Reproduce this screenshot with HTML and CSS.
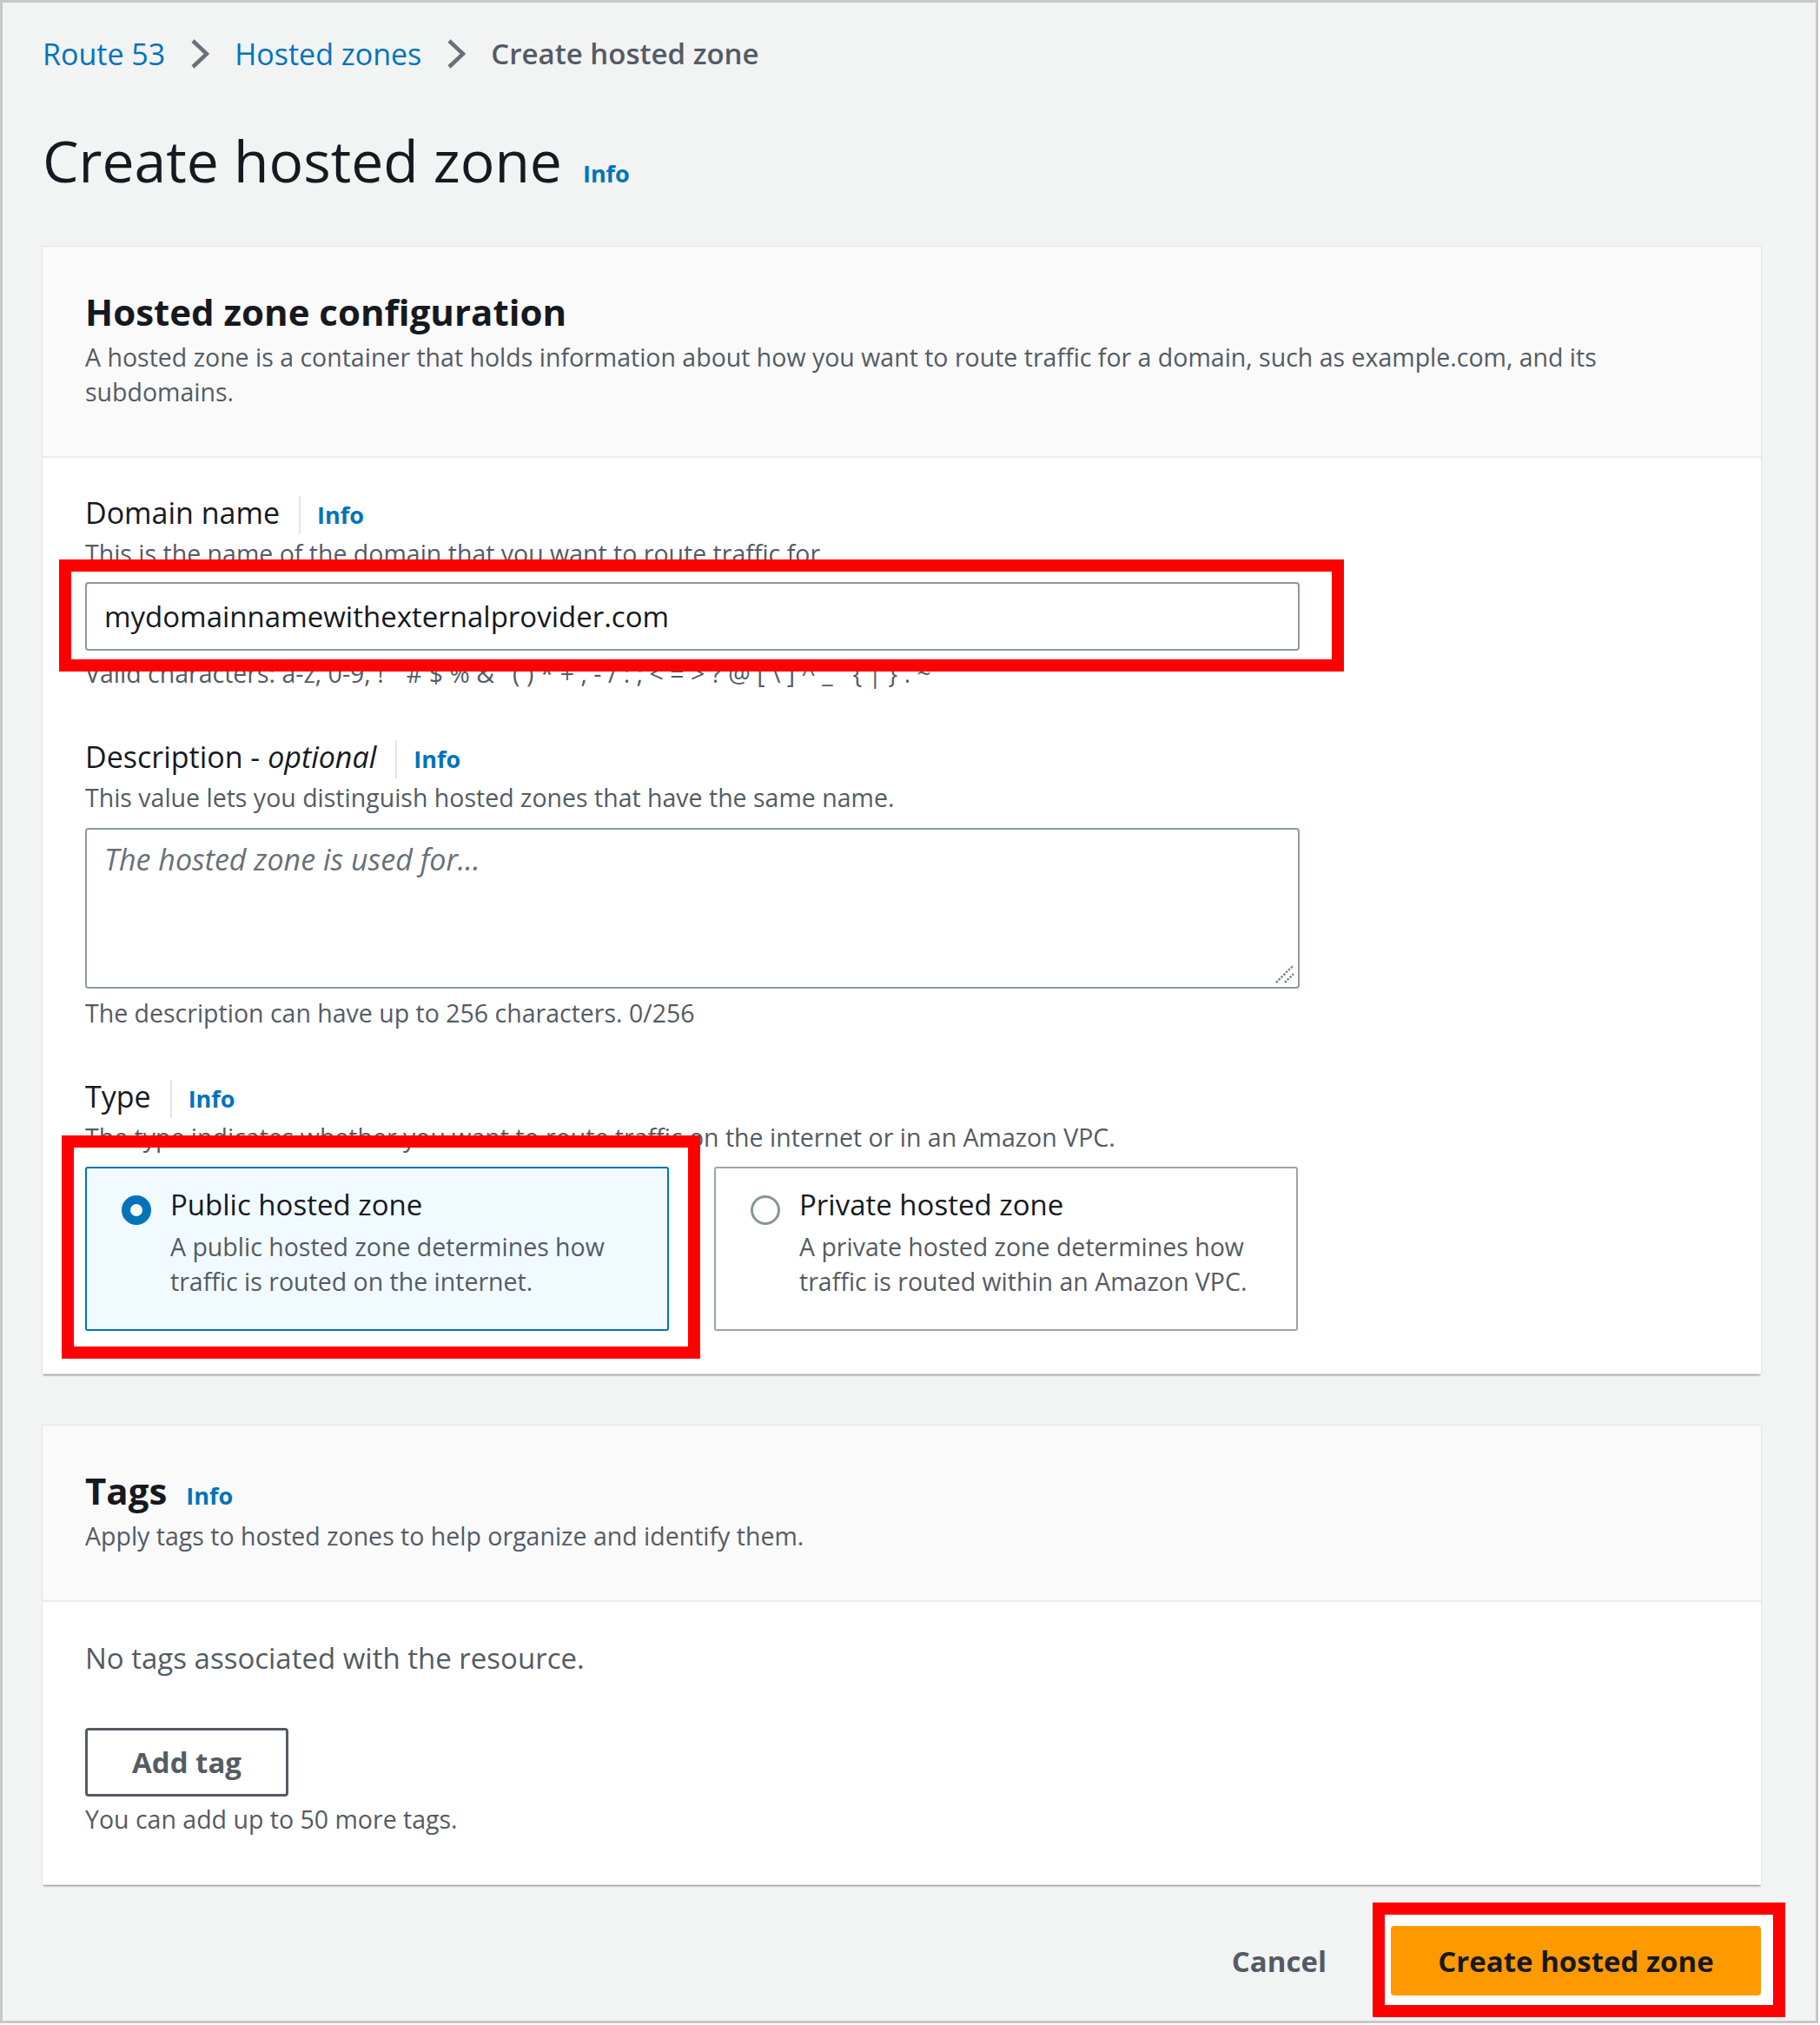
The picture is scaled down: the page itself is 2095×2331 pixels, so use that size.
FILE: index.html
```html
<!DOCTYPE html>
<html>
<head>
  <meta charset="utf-8" />
  <title>Create hosted zone</title>
  <link rel="stylesheet" href="styles.css">
</head>
<body>
  <div class="frame">

    <nav class="crumbs">
      <a href="#">Route 53</a>
      <svg class="chevron" viewBox="0 0 22 36"><polyline points="3,3 19,18 3,33" /></svg>
      <a href="#">Hosted zones</a>
      <svg class="chevron" viewBox="0 0 22 36"><polyline points="3,3 19,18 3,33" /></svg>
      <span class="here">Create hosted zone</span>
    </nav>

    <div class="page-head">
      <h1>Create hosted zone</h1>
      <a class="info" href="#">Info</a>
    </div>

    <section class="panel">
      <header class="panel-head">
        <h2>Hosted zone configuration</h2>
        <p>A hosted zone is a container that holds information about how you want to route traffic for a domain, such as example.com, and its subdomains.</p>
      </header>
      <div class="panel-body">

        <div class="field">
          <div class="label-row"><span class="label">Domain name</span><a class="info sep" href="#">Info</a></div>
          <p class="hint">This is the name of the domain that you want to route traffic for.</p>
          <input class="text-input" type="text" value="mydomainnamewithexternalprovider.com">
          <p class="hint after">Valid characters: a-z, 0-9, ! &quot; # $ % &amp; ' ( ) * + , - / : ; &lt; = &gt; ? @ [ \ ] ^ _ &#96; { | } . ~</p>
        </div>

        <div class="field">
          <div class="label-row"><span class="label">Description - <i>optional</i></span><a class="info sep" href="#">Info</a></div>
          <p class="hint">This value lets you distinguish hosted zones that have the same name.</p>
          <div class="area-wrap">
            <textarea class="text-area" placeholder="The hosted zone is used for..."></textarea>
            <svg class="grip" viewBox="0 0 24 24"><line x1="2" y1="22" x2="22" y2="2" /><line x1="12" y1="22" x2="22" y2="12" /></svg>
          </div>
          <p class="hint after count">The description can have up to 256 characters. 0/256</p>
        </div>

        <div class="field">
          <div class="label-row"><span class="label">Type</span><a class="info sep" href="#">Info</a></div>
          <p class="hint">The type indicates whether you want to route traffic on the internet or in an Amazon VPC.</p>
          <div class="choices">
            <div class="choice selected">
              <span class="radio"></span>
              <div class="choice-text">
                <div class="choice-title">Public hosted zone</div>
                <div class="choice-desc">A public hosted zone determines how traffic is routed on the internet.</div>
              </div>
            </div>
            <div class="choice">
              <span class="radio"></span>
              <div class="choice-text">
                <div class="choice-title">Private hosted zone</div>
                <div class="choice-desc">A private hosted zone determines how traffic is routed within an Amazon VPC.</div>
              </div>
            </div>
          </div>
        </div>

      </div>
    </section>

    <section class="panel tags">
      <header class="panel-head">
        <div class="head-row"><h2>Tags</h2><a class="info" href="#">Info</a></div>
        <p>Apply tags to hosted zones to help organize and identify them.</p>
      </header>
      <div class="panel-body">
        <div class="empty">No tags associated with the resource.</div>
        <button class="btn-normal">Add tag</button>
        <p class="hint after">You can add up to 50 more tags.</p>
      </div>
    </section>

    <div class="actions">
      <button class="btn-link">Cancel</button>
      <button class="btn-primary">Create hosted zone</button>
    </div>

    <!-- red annotation boxes -->
    <div class="mark mark-domain"></div>
    <div class="mark mark-type"></div>
    <div class="mark mark-submit"></div>

  </div>
</body>
</html>
```

FILE: styles.css
```css
html, body {
  margin: 0;
  padding: 0;
  background: #ffffff;
}

body {
  font-family: "Open Sans", "Noto Sans", sans-serif;
  font-size: 28.5px;
  line-height: 40px;
  color: #545b64;
}

.frame {
  position: relative;
  box-sizing: border-box;
  width: 2093px;
  height: 2329px;
  border: 3px solid #c7c9c9;
  background: #f2f3f3;
  padding: 37px 63px 0 46px;
}

a {
  color: #0073bb;
  text-decoration: none;
}

/* breadcrumbs */
.crumbs {
  display: flex;
  align-items: center;
  height: 44px;
  font-size: 34px;
  line-height: 44px;
}

.crumbs .chevron {
  width: 22px;
  height: 36px;
  margin: 0 29px;
}

.chevron polyline {
  fill: none;
  stroke: #687078;
  stroke-width: 4.5;
}

.crumbs .here {
  color: #545b64;
  font-weight: 600;
  font-size: 33px;
}

/* page title */
.page-head {
  display: flex;
  align-items: baseline;
  margin-top: 60px;
}

.page-head h1 {
  margin: 0;
  font-size: 66px;
  line-height: 80px;
  font-weight: 400;
  color: #16191f;
}

.info {
  font-size: 27px;
  font-weight: 700;
  color: #0073bb;
}

.page-head .info {
  margin-left: 24px;
}

/* panels */
.panel {
  margin-top: 60px;
  background: #ffffff;
  box-shadow: 0 0 0 1px #e4e7e7, 0 3px 2px -1px rgba(0, 28, 36, 0.5);
}

.panel.tags {
  margin-top: 60px;
}

.panel-head {
  background: #fafafa;
  border-bottom: 2px solid #eaeded;
  padding: 48px 49px 54px 49px;
}

.panel-head h2 {
  margin: 0;
  font-size: 42px;
  line-height: 54px;
  font-weight: 700;
  color: #16191f;
}

.panel-head p {
  margin: 5px 0 0 0;
}

.head-row {
  display: flex;
  align-items: baseline;
}

.head-row .info {
  margin-left: 22px;
}

.panel-body {
  padding: 41px 49px 49px 49px;
}

.tags .panel-body {
  padding: 43px 49px 55px 49px;
}

/* form fields */
.field + .field {
  margin-top: 54px;
}

.label-row {
  display: flex;
  align-items: baseline;
  font-size: 34px;
  line-height: 44px;
  color: #16191f;
}

.label-row .sep {
  margin-left: 22px;
  padding-left: 19px;
  border-left: 2px solid #e3e6e6;
}

.hint {
  margin: 2px 0 0 0;
}

.hint.after {
  margin-top: 6px;
}

.hint.count {
  margin-top: 8px;
}

.text-input,
.text-area {
  display: block;
  box-sizing: border-box;
  width: 1398px;
  border: 2px solid #8d9a9b;
  border-radius: 4px;
  background: #ffffff;
  font-family: "Open Sans", "Noto Sans", sans-serif;
  line-height: 44px;
  color: #16191f;
  outline: none;
}

.text-input {
  height: 79px;
  margin-top: 13px;
  padding: 0 20px;
  font-size: 33px;
}

.area-wrap {
  position: relative;
  width: 1398px;
  margin-top: 15px;
}

.text-area {
  height: 185px;
  padding: 12px 20px;
  font-size: 34px;
  resize: none;
}

.text-area::placeholder {
  font-style: italic;
  color: #687078;
}

.grip {
  position: absolute;
  right: 5px;
  bottom: 5px;
  width: 24px;
  height: 24px;
}

.grip line {
  stroke: #7d8a8b;
  stroke-width: 2.5;
  stroke-dasharray: 2.5 1.5;
}

/* radio tiles */
.choices {
  display: grid;
  grid-template-columns: 672px 672px;
  column-gap: 52px;
  margin-top: 14px;
}

.choice {
  display: flex;
  gap: 22px;
  box-sizing: border-box;
  height: 189px;
  padding: 20px 20px 0 40px;
  border: 2px solid #9aa6a7;
  border-radius: 3px;
  background: #ffffff;
}

.choice.selected {
  border-color: #0073bb;
  background: #f1faff;
}

.radio {
  flex: none;
  box-sizing: border-box;
  width: 34px;
  height: 34px;
  margin-top: 11px;
  border-radius: 50%;
  border: 3px solid #879596;
  background: #ffffff;
}

.selected .radio {
  border: 10px solid #0073bb;
}

.choice-title {
  font-size: 33px;
  line-height: 44px;
  color: #16191f;
}

.choice-desc {
  margin-top: 6px;
}

/* tags */
.empty {
  font-size: 33px;
  line-height: 44px;
  color: #545b64;
}

.btn-normal {
  display: block;
  box-sizing: border-box;
  width: 234px;
  height: 79px;
  margin-top: 58px;
  border: 3px solid #545b64;
  border-radius: 4px;
  background: #ffffff;
  font-family: "Open Sans", "Noto Sans", sans-serif;
  font-size: 33px;
  font-weight: 700;
  color: #545b64;
}

/* footer actions */
.actions {
  display: flex;
  justify-content: flex-end;
  align-items: center;
  margin-top: 48px;
}

.btn-link {
  margin-right: 74px;
  padding: 0;
  border: none;
  background: none;
  font-family: "Open Sans", "Noto Sans", sans-serif;
  font-size: 33px;
  font-weight: 700;
  color: #545b64;
}

.btn-primary {
  position: relative;
  z-index: 2;
  box-sizing: border-box;
  width: 426px;
  height: 80px;
  border: none;
  border-radius: 4px;
  background: #ff9900;
  font-family: "Open Sans", "Noto Sans", sans-serif;
  font-size: 33px;
  font-weight: 700;
  color: #16191f;
}

/* annotation overlays */
.mark {
  position: absolute;
  box-sizing: border-box;
  border: 14px solid #ff0000;
  z-index: 1;
}

.mark-domain {
  left: 65px;
  top: 641px;
  width: 1479px;
  height: 129px;
}

.mark-type {
  left: 68px;
  top: 1304px;
  width: 735px;
  height: 257px;
}

.mark-submit {
  left: 1577px;
  top: 2187px;
  width: 475px;
  height: 132px;
  background: #ffffff;
}
```
